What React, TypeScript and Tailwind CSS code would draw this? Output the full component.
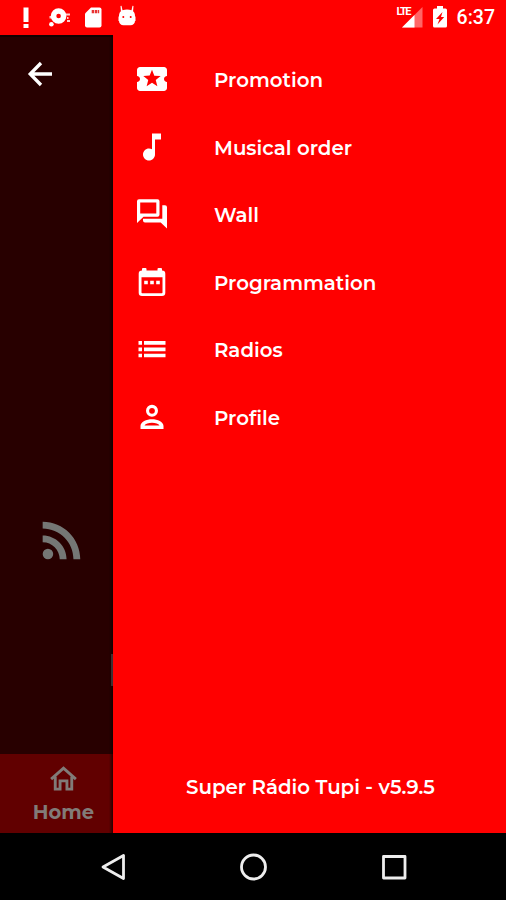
import React from 'react';
import { MdLocalPlay, MdMusicNote, MdRssFeed } from 'react-icons/md';

type IconProps = { className?: string };

const BackIcon: React.FC<IconProps> = ({ className }) => (
  <svg className={className} viewBox="0 0 36 36" fill="none" stroke="currentColor" strokeWidth="3.3">
    <path d="M30 18H9M19 7 8.200 18 19 29" />
  </svg>
);

const HomeIcon: React.FC<IconProps> = ({ className }) => (
  <svg className={className} viewBox="0 0 24 24" fill="none" stroke="currentColor" strokeWidth="2.1">
    <path d="M3 11.700 12 3.800l9 7.900M6 10v9h3.500v-6h5v6H18v-9" />
  </svg>
);

const ForumIcon: React.FC<IconProps> = ({ className }) => (
  <svg className={className} viewBox="0 0 36 36" fill="currentColor">
    <path
      fillRule="evenodd"
      d="M5 3.200h18.500A2 2 0 0 1 25.500 5.200v13.600a2 2 0 0 1-2 2H9.500L3 27V5.200a2 2 0 0 1 2-2zM6.200 6.400v11.200h16.100V6.400z"
    />
    <path d="M28.300 9.200H31a2 2 0 0 1 2 2v21.300l-6.300-6H11a2 2 0 0 1-2-2v-1.800h19.300z" />
  </svg>
);

const CalendarIcon: React.FC<IconProps> = ({ className }) => (
  <svg className={className} viewBox="0 0 36 36" fill="currentColor">
    <path
      fillRule="evenodd"
      d="M9 4h2.500a1 1 0 0 1 1 1v1.500h11V5a1 1 0 0 1 1-1H27a1 1 0 0 1 1 1v1.500a3.300 3.300 0 0 1 3.300 3.300v18.900a3.300 3.300 0 0 1-3.300 3.300H8a3.300 3.300 0 0 1-3.300-3.300V9.800A3.300 3.300 0 0 1 8 6.500V5a1 1 0 0 1 1-1zM7.500 13.300v15.200a.7.7 0 0 0 .7.7h19.600a.7.7 0 0 0 .7-.7V13.300z"
    />
    <path d="M10.200 16.800h3.600v3.400h-3.600zM16.200 16.800h3.600v3.400h-3.600zM22.200 16.800h3.600v3.400h-3.600z" />
  </svg>
);

const ListIcon: React.FC<IconProps> = ({ className }) => (
  <svg className={className} viewBox="0 0 36 36" fill="currentColor">
    <path d="M4.500 10h3.500v3.800H4.500zM4.500 16.500h3.500v3.800H4.500zM4.500 22.800h3.500v3.500H4.500z" />
    <path d="M10 10h21.500v3.800H10zM10 16.500h21.500v3.800H10zM10 22.800h21.500v3.500H10z" />
  </svg>
);

const ProfileIcon: React.FC<IconProps> = ({ className }) => (
  <svg className={className} viewBox="0 0 36 36" fill="currentColor">
    <path fillRule="evenodd" d="M18 5.800a6 6 0 1 1 0 12 6 6 0 0 1 0-12zm0 3.100a2.900 2.900 0 1 0 0 5.800 2.900 2.900 0 0 0 0-5.800z" />
    <path fillRule="evenodd" d="M18 20.200c5.500 0 11.500 2.500 11.500 6.800v3h-23v-3c0-4.300 6-6.800 11.500-6.800zm0 3.500c-3.500 0-6.500 1-7.500 2.700h15c-1-1.700-4-2.700-7.500-2.700z" />
  </svg>
);

const menu = [
  { label: 'Promotion', icon: MdLocalPlay },
  { label: 'Musical order', icon: MdMusicNote },
  { label: 'Wall', icon: ForumIcon },
  { label: 'Programmation', icon: CalendarIcon },
  { label: 'Radios', icon: ListIcon },
  { label: 'Profile', icon: ProfileIcon },
];

const StatusBar: React.FC = () => {
  return (
    <header className="flex h-[35px] shrink-0 items-start bg-[#ff0000] pl-[23px] text-white">
      <svg className="mt-[7px] h-[21px] w-[6px]" viewBox="0 0 6 21" fill="currentColor">
        <path d="M.5.5h5V15h-5zM.5 17h5v4h-5z" />
      </svg>
      <svg className="mt-[7px] ml-[19px] h-5 w-6" viewBox="0 0 24 20" fill="currentColor">
        <path fillRule="evenodd" d="M10.600 1.200a7.800 7.800 0 1 1 0 15.600 7.800 7.800 0 0 1 0-15.600zm0 5.500a2.300 2.300 0 1 0 0 4.600 2.300 2.300 0 0 0 0-4.600z" />
        <circle cx="3.400" cy="17.200" r="2.300" />
        <path d="M1.500 9h3v2.500h-3zM18 6.500h4v2h-4zM19 10h1.500v2H19zM19 13h3v2h-3z" opacity=".8" />
      </svg>
      <svg className="mt-[7px] ml-[12px] h-[21px] w-[18px]" viewBox="0 0 18 21" fill="currentColor">
        <path d="M7 .5h8.500a2 2 0 0 1 2 2v16a2 2 0 0 1-2 2H3a2 2 0 0 1-2-2V6.500z" />
        <path d="M7.700 3h2.300v3.200H7.700zM10.700 3H13v3.200h-2.300zM13.600 3h1.600v3.200h-1.600z" fill="#e83333" />
      </svg>
      <svg className="mt-[5px] ml-[16px] h-[21px] w-[18px]" viewBox="0 0 18 21" fill="currentColor">
        <path fillRule="evenodd" d="M3.500.8 4.500 5.200Q9 4 13.500 5.200L14.500.8l1 .3-.4 5.200C17 8 17 10 17 11.500h.5V16H17c0 2.500-2 4.300-4.500 4.300h-7C3 20.300 1 18.500 1 16H.5v-4.500H1c0-2 .2-3.800 1.900-5.200L2.500 1.100zM5.300 11a1 1 0 1 0 0 2 1 1 0 0 0 0-2zm7.400 0a1 1 0 1 0 0 2 1 1 0 0 0 0-2z" />
      </svg>
      <div className="mr-[11px] ml-auto flex items-start">
        <div className="relative mt-[7px] h-[21px] w-[26px]">
          <svg className="h-[21px] w-[26px]" viewBox="0 0 26 21" fill="currentColor">
            <path opacity=".4" d="M25.500 0v20.500H5z" />
            <path d="M17.500 8v12.500H5z" />
          </svg>
          <span className="absolute top-0 left-0 block h-[10px] w-[14px] bg-[#ff0000] font-['Roboto',sans-serif] text-[11px] leading-[10px] font-bold tracking-[-1.4px]">LTE</span>
        </div>
        <svg className="mt-[6px] ml-[10px] h-[22px] w-[14px]" viewBox="0 0 14 22" fill="currentColor">
          <path fillRule="evenodd" d="M4 0h6v2.500h2.500A1.500 1.500 0 0 1 14 4v16a1.500 1.500 0 0 1-1.500 1.500h-11A1.500 1.500 0 0 1 0 20V4a1.500 1.500 0 0 1 1.500-1.500H4zM9.500 6 3 13h3.500l-2 5.500L11.200 11H8z" />
        </svg>
        <span className="mt-[6px] ml-[10px] font-['Roboto',sans-serif] text-[19.5px] leading-6 font-medium">6:37</span>
      </div>
    </header>
  );
};

const Backdrop: React.FC = () => {
  return (
    <div className="relative flex w-[113px] shrink-0 flex-col bg-[#280000]">
      <div className="h-[2px] bg-[#140000]"></div>
      <BackIcon className="mt-[19px] ml-[22px] size-9 text-white" />
      <MdRssFeed className="mt-[419px] ml-[33px] size-[58px] text-[#757775]" />
      <div className="mt-auto flex h-[79px] flex-col items-center bg-[#610000] pl-[14px] text-[#817b78]">
        <HomeIcon className="mt-[9px] size-[33px]" />
        <span className="mt-[4px] text-[19.5px] leading-6 font-bold">Home</span>
      </div>
      {/* edge shadow cast by the open drawer */}
      <div className="absolute inset-y-0 right-0 w-[4px] bg-linear-to-r from-transparent to-black/60"></div>
      <div className="absolute top-[619px] right-0 h-[32px] w-[2px] bg-[#3a3033]"></div>
    </div>
  );
};

const Drawer: React.FC = () => {
  return (
    <nav className="flex flex-1 flex-col bg-[#ff0000] text-white">
      <ul className="mt-[10.5px]">
        {menu.map(({ label, icon: Icon }) => (
          <li key={label} className="flex h-[67.5px] items-center pl-[21px]">
            <Icon className="size-9" />
            <span className="mt-[2px] ml-[44px] text-[19.8px] leading-6 font-semibold whitespace-nowrap">{label}</span>
          </li>
        ))}
      </ul>
      <p className="mt-auto mb-[34px] pl-[73px] text-[19.8px] leading-6 font-semibold whitespace-nowrap">Super Rádio Tupi - v5.9.5</p>
    </nav>
  );
};

const App: React.FC = () => {
  return (
    <main className="flex h-[900px] w-[506px] flex-col overflow-hidden bg-black font-['Montserrat','Inter',sans-serif]">
      <StatusBar />
      <div className="flex min-h-0 flex-1">
        <Backdrop />
        <Drawer />
      </div>
      <footer className="flex h-[67px] shrink-0 items-center pl-[100px] text-[#eeeeee]">
        <svg className="size-7" viewBox="0 0 28 28" fill="none" stroke="currentColor" strokeWidth="2.8" strokeLinejoin="round">
          <path d="M23.500 2.500v23L3 14z" />
        </svg>
        <svg className="ml-[112px] size-7" viewBox="0 0 28 28" fill="none" stroke="currentColor" strokeWidth="2.8">
          <circle cx="13.500" cy="14" r="12" />
        </svg>
        <svg className="ml-[112px] size-7" viewBox="0 0 28 28" fill="none" stroke="currentColor" strokeWidth="2.8" strokeLinejoin="round">
          <path d="M3.500 3.500h21.500v21.500H3.500z" />
        </svg>
      </footer>
    </main>
  );
};

export default App;
